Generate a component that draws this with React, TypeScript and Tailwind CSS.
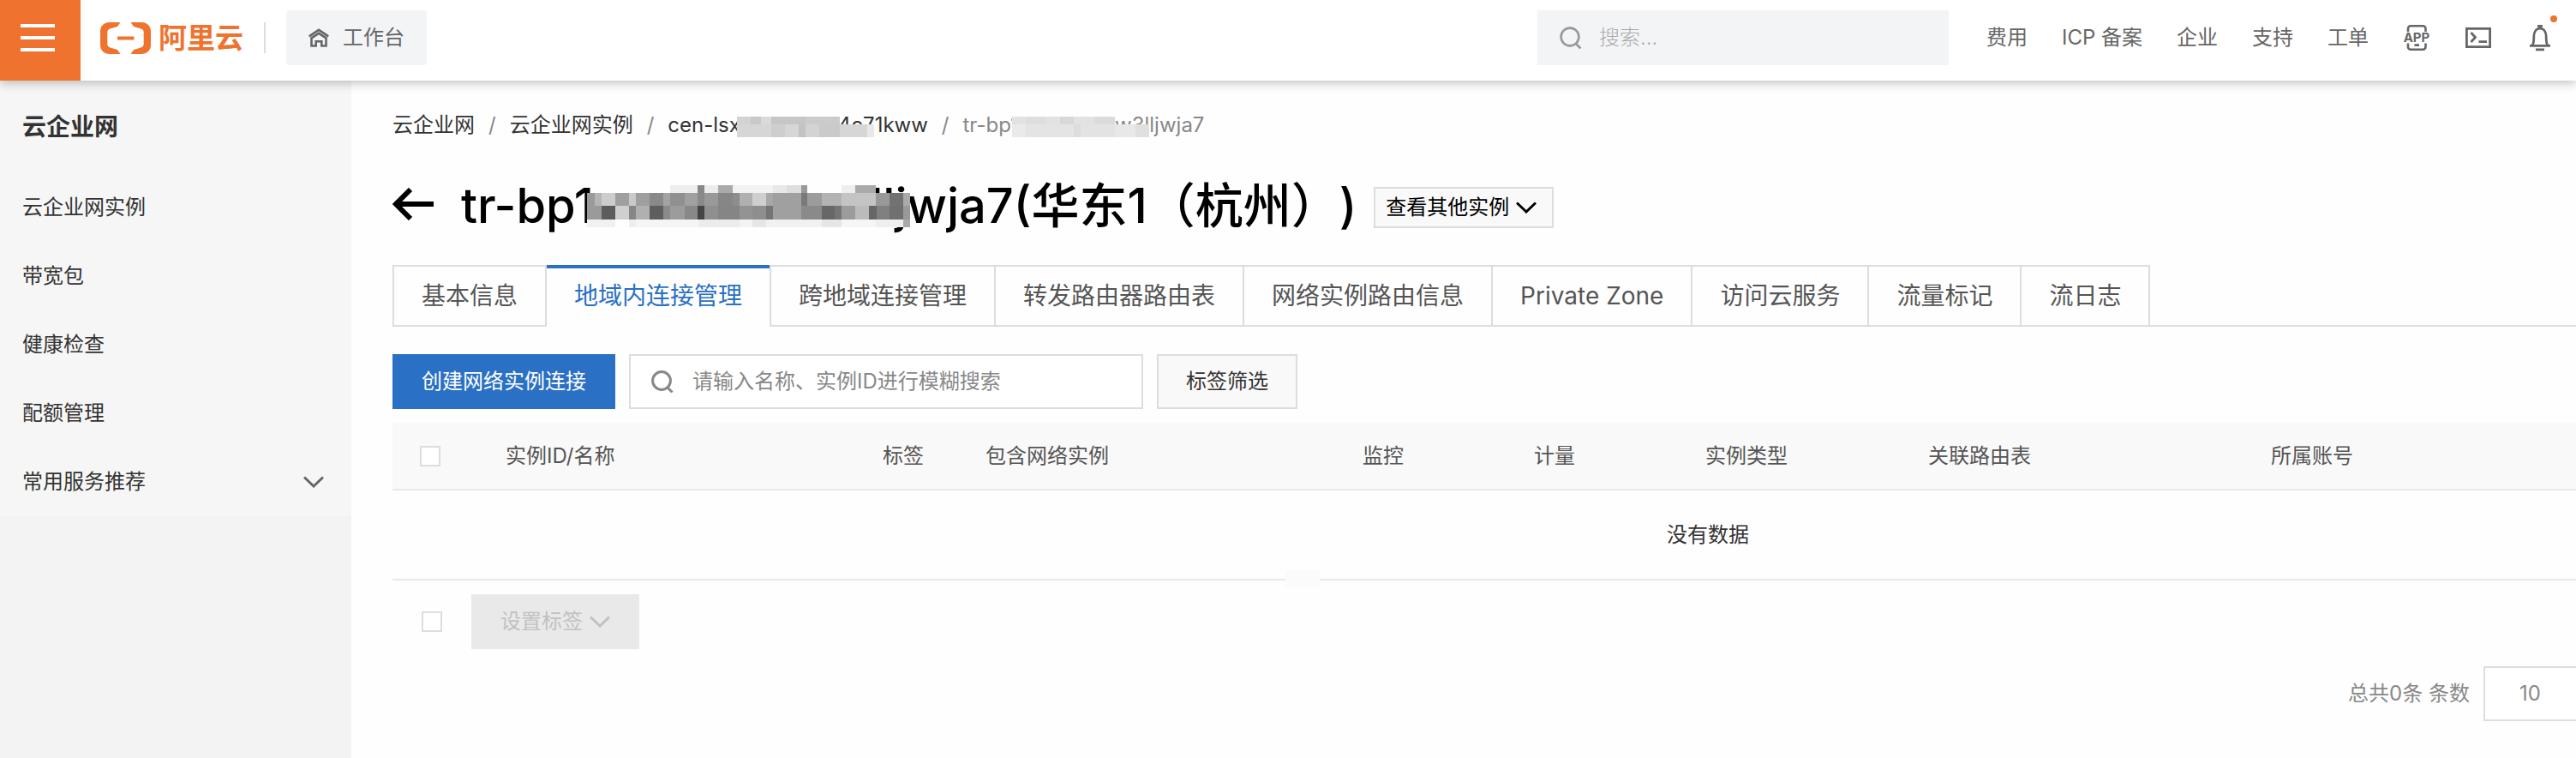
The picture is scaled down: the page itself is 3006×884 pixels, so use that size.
import { ReactNode } from "react"

const navItems = ["云企业网实例", "带宽包", "健康检查", "配额管理"]

const topLinks = ["费用", "ICP 备案", "企业", "支持", "工单"]

const tabs = [
  "基本信息",
  "地域内连接管理",
  "跨地域连接管理",
  "转发路由器路由表",
  "网络实例路由信息",
  "Private Zone",
  "访问云服务",
  "流量标记",
  "流日志",
]

const columns = [
  { label: "实例ID/名称", width: "w-[440px]" },
  { label: "标签", width: "w-[120px]" },
  { label: "包含网络实例", width: "w-[440px]" },
  { label: "监控", width: "w-[200px]" },
  { label: "计量", width: "w-[200px]" },
  { label: "实例类型", width: "w-[260px]" },
  { label: "关联路由表", width: "w-[400px]" },
  { label: "所属账号", width: "" },
]

// [start, end, fill] runs of one mosaic row
type Run = [number, number, string]
type Row = { y: number; h: number; runs: Run[] }

const titleMosaic: Row[] = [
  {
    y: 0, h: 9, runs: [
      [218, 288, "#eee"], [288, 307, "#888"], [307, 343, "#ececec"], [343, 380, "#aaa"], [380, 485, "#f2f2f2"],
      [485, 522, "#e8e8e8"], [522, 558, "#dedede"], [558, 575, "#999"], [665, 700, "#eee"], [700, 753, "#aaa"],
    ],
  },
  {
    y: 9, h: 15, runs: [
      [0, 20, "#9a9a9a"], [20, 38, "#b5b5b5"], [38, 73, "#cdcdcd"], [73, 110, "#9f9f9f"], [110, 127, "#c9c9c9"],
      [127, 163, "#9f9f9f"], [163, 200, "#898989"], [200, 218, "#a3a3a3"], [218, 255, "#909090"], [255, 288, "#a0a0a0"],
      [288, 307, "#8a8a8a"], [307, 343, "#999"], [343, 380, "#868686"], [380, 397, "#8d8d8d"], [397, 432, "#b0b0b0"],
      [432, 467, "#cfcfcf"], [467, 485, "#a8a8a8"], [485, 558, "#a0a0a0"], [558, 575, "#7a7a7a"], [575, 612, "#9c9c9c"],
      [612, 665, "#b3b3b3"], [665, 753, "#c4c4c4"], [753, 790, "#999"], [790, 826, "#727272"], [826, 843, "#aaa"],
    ],
  },
  {
    y: 24, h: 16, runs: [
      [0, 38, "#9a9a9a"], [38, 73, "#5c5c5c"], [73, 110, "#cfcfcf"], [110, 127, "#868686"], [127, 163, "#b0b0b0"],
      [163, 200, "#5e5e5e"], [200, 218, "#8b8b8b"], [218, 255, "#9c9c9c"], [255, 288, "#888"], [288, 307, "#444"],
      [307, 343, "#8f8f8f"], [343, 397, "#858585"], [397, 432, "#939393"], [432, 467, "#8e8e8e"], [467, 485, "#757575"],
      [485, 558, "#a0a0a0"], [558, 612, "#8a8a8a"], [612, 647, "#676767"], [647, 665, "#757575"], [665, 700, "#9c9c9c"],
      [700, 735, "#bbb"], [735, 755, "#666"], [755, 790, "#808080"], [790, 826, "#707070"], [826, 843, "#999"],
    ],
  },
  {
    y: 40, h: 9, runs: [
      [0, 73, "#f1f1f1"], [110, 127, "#eee"], [127, 290, "#f5f5f5"], [290, 397, "#ececec"], [397, 432, "#f3f3f3"],
      [432, 467, "#e6e6e6"], [467, 612, "#f1f1f1"], [612, 665, "#e6e6e6"], [665, 753, "#f6f6f6"], [753, 826, "#efefef"],
      [826, 843, "#aaa"],
    ],
  },
]

const cenMosaic: Row[] = [
  { y: 0, h: 9, runs: [[0, 16, "#d3d3d3"], [16, 28, "#c8c8c8"], [28, 40, "#dadada"], [40, 80, "#c6c6c6"], [80, 120, "#cbcbcb"]] },
  { y: 9, h: 15, runs: [[0, 40, "#d6d6d6"], [40, 56, "#cecece"], [56, 72, "#d6d6d6"], [72, 80, "#c3c3c3"], [80, 96, "#d3d3d3"], [96, 120, "#cacaca"], [120, 152, "#d6d6d6"], [152, 160, "#e8e8e8"]] },
]

const trMosaic: Row[] = [
  { y: 0, h: 9, runs: [[0, 16, "#e2e2e2"], [16, 40, "#dedede"], [40, 56, "#e2e2e2"], [56, 72, "#d8d8d8"], [72, 96, "#e2e2e2"], [96, 120, "#dbdbdb"]] },
  { y: 9, h: 15, runs: [[0, 16, "#eaeaea"], [16, 72, "#e4e4e4"], [72, 80, "#ddd"], [80, 120, "#e3e3e3"], [120, 144, "#e8e8e8"], [144, 160, "#e0e0e0"]] },
]

function Mosaic({ rows, viewBox, className }: { rows: Row[]; viewBox: string; className: string }) {
  return (
    <svg viewBox={viewBox} preserveAspectRatio="none" shapeRendering="crispEdges" className={className} aria-hidden="true">
      {rows.map((row) =>
        row.runs.map(([start, end, fill]) => (
          <rect key={`${row.y}-${start}`} x={start} y={row.y} width={end - start} height={row.h} fill={fill} />
        ))
      )}
    </svg>
  )
}

function Chevron({ className }: { className?: string }) {
  return (
    <svg viewBox="0 0 24 14" fill="none" stroke="currentColor" strokeWidth="3" className={`h-[14px] w-6 shrink-0 ${className ?? ""}`} aria-hidden="true">
      <path d="M1 1.5l11 10.5L23 1.5" />
    </svg>
  )
}

function SearchIcon({ className }: { className?: string }) {
  return (
    <svg viewBox="0 0 26 26" fill="none" stroke="currentColor" strokeWidth="2.6" className={`h-[26px] w-[26px] shrink-0 ${className ?? ""}`} aria-hidden="true">
      <circle cx="12" cy="12" r="10.4" />
      <path d="M19 20l5.5 5.5" />
    </svg>
  )
}

function IconButton({ label, children }: { label: string; children: ReactNode }) {
  return (
    <button type="button" aria-label={label} className="relative flex h-8 w-8 shrink-0 items-center justify-center text-[#666]">
      {children}
    </button>
  )
}

function Header() {
  return (
    <header className="relative z-10 flex h-[94px] items-center bg-white pr-[26px] shadow-[0_2px_12px_rgba(0,0,0,0.28)]">
      <button type="button" aria-label="菜单" className="flex h-[94px] w-[94px] shrink-0 flex-col items-center gap-[10px] bg-[#ef732e] pt-7 pr-[6px]">
        <span className="h-1 w-10 bg-white" />
        <span className="h-1 w-10 bg-white" />
        <span className="h-1 w-10 bg-white" />
      </button>
      <a href="#" className="ml-[23px] flex shrink-0 items-center gap-[9px] text-[#ef732e]">
        <svg viewBox="0 0 59 37" className="mt-[-6px] h-[37px] w-[59px]" fill="currentColor" aria-hidden="true">
          <path d="M23.500 0H11C4.500 0 0 4.500 0 10.500v16C0 32.500 4.500 37 11 37h12.500l-3.500-5-8.500-2.600C9.500 28.800 8.300 27.300 8.300 25.500v-14c0-1.800 1.200-3.300 3.200-3.900L20 5z" />
          <path d="M35.500 0H48c6.500 0 11 4.500 11 10.500v16C59 32.500 54.500 37 48 37H35.500l3.500-5 8.500-2.600c2-.6 3.200-2.100 3.200-3.900v-14c0-1.800-1.200-3.300-3.200-3.900L39 5z" />
          <path d="M20 16.500h19.500v4H20z" />
        </svg>
        <span className="mt-[-6px] text-[33px] leading-[40px] font-bold">阿里云</span>
      </a>
      <span className="mt-[-6px] ml-6 h-9 w-[2px] shrink-0 bg-[#ddd]" />
      <a href="#" className="mt-[-6px] ml-6 flex h-16 shrink-0 items-center gap-4 rounded-[4px] bg-[#f3f4f6] px-[26px] text-2xl text-[#666]">
        <svg viewBox="0 0 24 22" fill="none" stroke="currentColor" strokeWidth="2.6" className="h-[22px] w-6" aria-hidden="true">
          <path d="M.8 9.300L12 1.800l11.200 7.500" />
          <path d="M3.500 11.300V20.500h5.200v-5.200h6.600v5.200h5.200v-9.200L12 5.900z" />
        </svg>
        工作台
      </a>
      <label className="mt-[-6px] ml-auto flex h-16 w-[480px] items-center gap-5 bg-[#f3f4f6] px-[26px] text-[#999]">
        <SearchIcon />
        <input type="text" aria-label="搜索" placeholder="搜索..." className="w-full min-w-0 bg-transparent text-2xl font-light outline-none placeholder:text-[#aaa]" />
      </label>
      <nav className="mt-[-6px] ml-11 flex shrink-0 items-center gap-10 text-2xl text-[#666]">
        {topLinks.map((link) => (
          <a key={link} href="#">{link}</a>
        ))}
        <IconButton label="APP">
          <svg viewBox="0 0 32 32" fill="none" stroke="currentColor" strokeWidth="2.600" className="h-8 w-8" aria-hidden="true">
            <path d="M6 9V5.300a3 3 0 0 1 3-3h14.500a3 3 0 0 1 3 3V9M6 22.500v4.200a3 3 0 0 0 3 3h14.500a3 3 0 0 0 3-3v-4.200M13.500 24.600h5.500" />
            <text x="16" y="21" textAnchor="middle" fontSize="15" fontWeight="700" fill="currentColor" stroke="none">APP</text>
          </svg>
        </IconButton>
        <IconButton label="Cloud Shell">
          <svg viewBox="0 0 32 32" fill="none" stroke="currentColor" strokeWidth="2.800" className="h-8 w-8" aria-hidden="true">
            <path d="M2.400 5.400h27.200v21.200H2.400zM7.500 10l5 5.500-5 5.500M16.500 20.700H26" />
          </svg>
        </IconButton>
        <IconButton label="消息">
          <svg viewBox="0 0 32 32" fill="none" stroke="currentColor" strokeWidth="2.800" className="h-8 w-8" aria-hidden="true">
            <path d="M4 25.300h24M7 25c1.800-2.500 1.800-4 1.800-9.500 0-6 2.600-10.300 7.200-10.300s7.200 4.300 7.200 10.300c0 5.500 0 7 1.800 9.500M13 2.300h6M11 29.800h10" />
          </svg>
          <span className="absolute -top-[10px] -right-1 h-2 w-2 rounded-full bg-[#ef732e]" />
        </IconButton>
      </nav>
    </header>
  )
}

function Sidebar() {
  return (
    <aside className="w-[410px] shrink-0 bg-[#f3f3f3] text-[#333]">
      <div className="bg-[#f6f6f6]">
        <h2 className="px-[26px] pt-[34px] pb-[34px] text-[28px] leading-10 font-semibold">云企业网</h2>
        <nav className="text-2xl">
          {navItems.map((item) => (
            <a key={item} href="#" className="flex h-20 items-center px-[26px]">{item}</a>
          ))}
          <button type="button" className="flex h-20 w-full items-center justify-between pr-8 pl-[26px]">
            常用服务推荐
            <Chevron className="text-[#666]" />
          </button>
        </nav>
      </div>
    </aside>
  )
}

function Breadcrumb() {
  return (
    <nav className="flex items-center gap-4 pt-9 text-2xl leading-8 whitespace-nowrap text-[#333]">
      <a href="#">云企业网</a>
      <span className="text-[#888]">/</span>
      <a href="#">云企业网实例</a>
      <span className="text-[#888]">/</span>
      <a href="#" className="flex">
        cen-lsx
        <span className="relative w-[114px]">
          <Mosaic rows={cenMosaic} viewBox="0 0 160 24" className="absolute top-[6px] -left-1 h-6 w-[160px] max-w-none" />
        </span>
        4c71kww
      </a>
      <span className="text-[#888]">/</span>
      <span className="flex text-[#888]">
        tr-bp1
        <span className="relative w-[104px]">
          <Mosaic rows={trMosaic} viewBox="0 0 160 24" className="absolute top-[6px] -left-2 h-6 w-[160px] max-w-none" />
        </span>
        tw3lljwja7
      </span>
    </nav>
  )
}

function InstanceTable() {
  return (
    <table className="w-[3070px] table-fixed border-collapse text-2xl">
      <thead>
        <tr className="h-[78px] border-b-2 border-[#e8e8e8] bg-[#f9f9f9] text-left text-[#555]">
          <th className="w-[132px] pl-8 font-normal">
            <input type="checkbox" aria-label="全选" className="block h-6 w-6 appearance-none border-2 border-[#ddd] bg-white" />
          </th>
          {columns.map((column) => (
            <th key={column.label} className={`font-normal ${column.width}`}>{column.label}</th>
          ))}
        </tr>
      </thead>
      <tbody>
        <tr className="h-[105px] border-b-2 border-[#e8e8e8]">
          <td colSpan={9} className="text-center text-[#333]">没有数据</td>
        </tr>
      </tbody>
    </table>
  )
}

export default function App() {
  return (
    <div className="flex min-h-screen flex-col overflow-hidden bg-[#fefefe] font-['Inter','Noto_Sans_CJK_SC',sans-serif]">
      <Header />
      <div className="flex flex-1">
        <Sidebar />
        <main className="min-w-0 flex-1 overflow-hidden pl-12">
          <Breadcrumb />

          <div className="mt-9 flex h-20 items-center whitespace-nowrap">
            <button type="button" aria-label="返回" className="shrink-0">
              <svg viewBox="0 0 48 38" fill="none" stroke="#000" strokeWidth="6" className="h-[38px] w-12" aria-hidden="true">
                <path d="M48 19H5M21 2L4 19l17 17" />
              </svg>
            </button>
            <h1 className="mt-1 ml-8 flex text-[56px] leading-[80px] font-medium text-black [text-spacing-trim:space-all]">
              tr-bp1
              <span className="relative w-[288px]">
                <Mosaic rows={titleMosaic} viewBox="0 0 843 49" className="absolute top-[16px] -left-2 h-[49px] w-[377px] max-w-none" />
              </span>
              3lljwja7(华东1（杭州）)
            </h1>
            <button type="button" className="mt-2 ml-5 flex h-12 shrink-0 items-center gap-2 border-2 border-[#ddd] bg-[#f9f9f9] pr-[18px] pl-3 text-2xl text-black">
              查看其他实例
              <Chevron />
            </button>
          </div>

          <div role="tablist" className="mt-[31px] flex text-[28px] text-[#555]">
            {tabs.map((tab, i) => (
              <button
                key={tab}
                type="button"
                role="tab"
                aria-selected={i === 1}
                className={
                  i === 1
                    ? "flex h-[72px] shrink-0 items-stretch text-[#2a70c4]"
                    : `h-[72px] shrink-0 border-y-2 border-r-2 border-[#ddd] px-8 ${i === 0 ? "border-l-2" : ""}`
                }
              >
                {i === 1 ? (
                  <>
                    <span className="flex items-center border-t-4 border-[#2a70c4] px-8 pb-1">{tab}</span>
                    <span className="w-[2px] bg-[#ddd]" />
                  </>
                ) : (
                  tab
                )}
              </button>
            ))}
            <span className="flex-1 border-b-2 border-[#ddd]" />
          </div>

          <div className="mt-8 flex gap-4 text-2xl">
            <button type="button" className="h-16 bg-[#2a70c4] px-[34px] text-white">创建网络实例连接</button>
            <label className="flex h-16 w-[600px] items-center gap-[22px] border-2 border-[#ddd] bg-white px-6 text-[#888]">
              <SearchIcon className="stroke-[3px]" />
              <input type="text" aria-label="搜索实例" placeholder="请输入名称、实例ID进行模糊搜索" className="w-full min-w-0 bg-transparent outline-none placeholder:text-[#888]" />
            </label>
            <button type="button" className="h-16 border-2 border-[#ddd] bg-[#f9f9f9] px-8 text-[#333]">标签筛选</button>
          </div>

          <div className="relative mt-4">
            <InstanceTable />
            <span className="absolute -bottom-2 left-[1042px] h-5 w-10 bg-[#fbfbfb]" />
          </div>

          <div className="mt-4 flex items-center pl-[34px] text-2xl">
            <input type="checkbox" aria-label="选择全部实例" className="h-6 w-6 appearance-none border-2 border-[#ddd] bg-white" />
            <button type="button" disabled className="ml-[34px] flex h-16 items-center gap-2 bg-[#e9e9e9] px-[34px] text-[#c1c1c1]">
              设置标签
              <Chevron />
            </button>
          </div>

          <div className="mt-5 flex items-center justify-end gap-4 text-2xl text-[#888]">
            <label htmlFor="page-size">总共0条 条数</label>
            <select id="page-size" className="h-16 w-[108px] appearance-none border-2 border-r-0 border-[#ddd] bg-white pl-10">
              <option>10</option>
            </select>
          </div>
        </main>
      </div>
    </div>
  )
}
